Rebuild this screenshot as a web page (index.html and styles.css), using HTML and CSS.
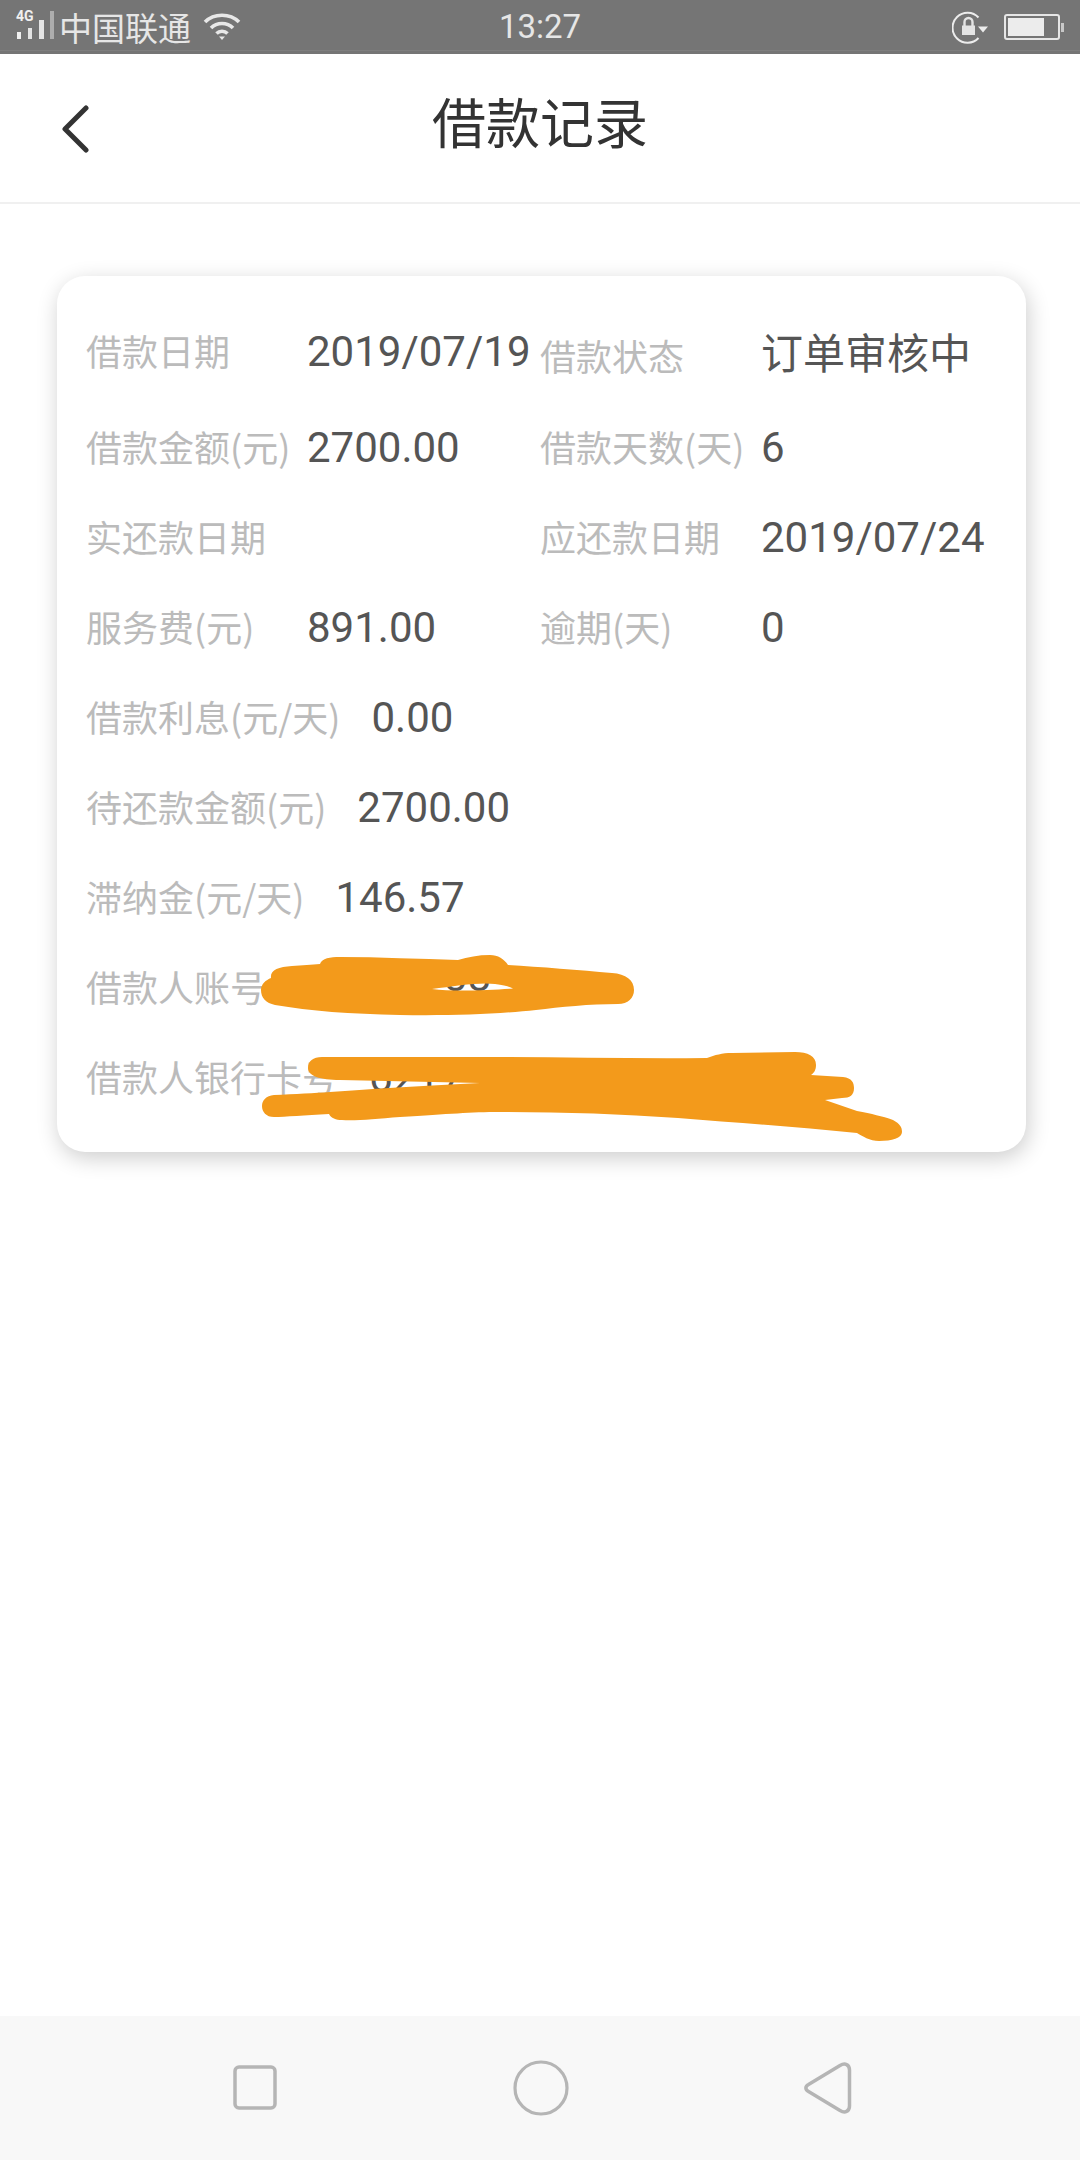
FILE: index.html
```html
<!DOCTYPE html>
<html lang="zh-CN">
<head>
<meta charset="utf-8">
<title>借款记录</title>
<link rel="stylesheet" href="styles.css">
</head>
<body>
<div class="screen">
  <div class="status">
    <div class="status-left">
      <div class="signal">
        <span class="net">4G</span>
        <svg class="bars" viewBox="0 0 40 28" width="40" height="28">
          <rect x="1" y="21" width="4" height="7" fill="#f0f0f0"/>
          <rect x="12" y="17" width="4" height="11" fill="#e4e4e4"/>
          <rect x="23" y="9" width="5" height="19" fill="#e4e4e4"/>
          <rect x="34" y="0" width="4" height="28" fill="#adadad"/>
        </svg>
      </div>
      <span class="carrier">中国联通</span>
      <svg class="wifi" viewBox="0 0 38 28" width="38" height="28" fill="none" stroke="#e8e8e8" stroke-width="3.6">
        <path d="M2 9C11 0 27 0 36 9"/>
        <path d="M8 15C14 9 24 9 30 15"/>
        <path d="M13.5 20.5C16.5 17.5 21.5 17.5 24.5 20.5"/>
        <path d="M16 23.5L19 27L22 23.5Z" fill="#e8e8e8" stroke="none"/>
      </svg>
    </div>
    <span class="time">13:27</span>
    <div class="status-right">
      <svg class="lock" viewBox="0 0 37 33" width="37" height="33" fill="none">
        <path d="M26.500 6.500A15 15 0 1 0 26.500 27" stroke="#ececec" stroke-width="2"/>
        <path d="M10 14.500h13v9.500h-13z" fill="#e4e4e4"/>
        <path d="M12.500 15V11a4 4 0 0 1 8 0V15" stroke="#e4e4e4" stroke-width="2.400"/>
        <path d="M26 15.500h10l-5 6z" fill="#ececec"/>
      </svg>
      <div class="battery"><div class="battery-fill"></div></div>
      <div class="battery-tip"></div>
    </div>
  </div>

  <header class="header">
    <svg class="back" viewBox="0 0 28 48" width="28" height="48" fill="none" stroke="#333" stroke-width="5" stroke-linecap="round" stroke-linejoin="round">
      <path d="M25 3L4 24L25 45"/>
    </svg>
    <h1 class="title">借款记录</h1>
  </header>

  <main class="main">
    <section class="card">
      <div class="row first">
        <div class="field left"><span class="label">借款日期</span><span class="value">2019/07/19</span></div>
        <div class="field right"><span class="label low">借款状态</span><span class="value low-value">订单审核中</span></div>
      </div>
      <div class="row">
        <div class="field left"><span class="label">借款金额(元)</span><span class="value">2700.00</span></div>
        <div class="field right"><span class="label">借款天数(天)</span><span class="value">6</span></div>
      </div>
      <div class="row">
        <div class="field left"><span class="label">实还款日期</span></div>
        <div class="field right"><span class="label">应还款日期</span><span class="value">2019/07/24</span></div>
      </div>
      <div class="row">
        <div class="field left"><span class="label">服务费(元)</span><span class="value">891.00</span></div>
        <div class="field right"><span class="label">逾期(天)</span><span class="value">0</span></div>
      </div>
      <div class="row"><span class="label auto">借款利息(元/天)</span><span class="value">0.00</span></div>
      <div class="row"><span class="label auto">待还款金额(元)</span><span class="value">2700.00</span></div>
      <div class="row"><span class="label auto">滞纳金(元/天)</span><span class="value">146.57</span></div>
      <div class="row"><span class="label auto">借款人账号</span><span class="value hidden-a">38</span></div>
      <div class="row"><span class="label auto">借款人银行卡号</span><span class="value">6217</span></div>

      <svg class="scribble" viewBox="0 0 1080 900" width="1080" height="900">
        <path fill="#f39a1b" fill-rule="evenodd" d="M261 714C261 708 266 704 271 702C270 694 278 691 292 690C302 689 312 689 320 688C322 682 330 681 340 681C380 681 420 683 458 684C468 681 478 679 490 679C498 679 504 683 508 689C540 691 580 694 612 697C626 698 634 704 634 714C634 722 628 728 618 728C590 728 560 731 536 734C500 738 450 740 400 739C350 738 310 735 275 729C266 727 261 722 261 714ZM432 713C455 710 480 706 495 708C505 709 510 711 513 712.500C490 714 455 716 432 713Z"/>
        <path fill="#f39a1b" fill-rule="evenodd" d="M308 792C308 785 313 781 322 781L500 781C570 781 640 783 707 782C715 779 722 777 732 777L795 776C808 776 816 780 816 789C816 794 814 797 811 799L843 801C852 802 854 807 854 812C854 819 850 822 842 822L825 824L857 835C872 838 882 840 893 844C900 848 902 851 902 856C902 862 892 865 879 865C870 865 862 860 857 857C800 851 740 847 678 842C620 838 560 836 500 836C470 836 450 838 400 841C375 843 355 845 342 844C336 844 331 842 329 838C305 839 285 841 274 841C266 841 262 836 262 830C262 824 266 820 274 819C295 818 315 817 330 816C345 815 360 814 373 813C405 811 440 809 480 807L340 804C320 804 308 800 308 792Z"/>
      </svg>
    </section>
  </main>

  <nav class="nav">
    <svg viewBox="0 0 44 46" width="44" height="46" fill="none" stroke="#b5b5b5" stroke-width="3.500">
      <rect x="2" y="2" width="40" height="41" rx="4"/>
    </svg>
    <svg viewBox="0 0 56 56" width="56" height="56" fill="none" stroke="#b5b5b5" stroke-width="3.200">
      <circle cx="28" cy="28" r="26"/>
    </svg>
    <svg viewBox="0 0 48 54" width="48" height="54" fill="none" stroke="#b5b5b5" stroke-width="3.500" stroke-linejoin="round">
      <path d="M4.500 23.500L36 4.500C41 1.500 45.500 3.500 45.500 9V45C45.500 50.500 41 52.500 36 49.500L4.500 30.500C1 28.500 1 25.500 4.500 23.500Z"/>
    </svg>
  </nav>
</div>
</body>
</html>
```
FILE: styles.css
```css
* { box-sizing: border-box; }

html, body {
  margin: 0;
  padding: 0;
  background: #fff;
}

.screen {
  width: 1080px;
  height: 2160px;
  display: flex;
  flex-direction: column;
  font-family: "Noto Sans CJK SC", "Roboto", sans-serif;
  overflow: hidden;
}

/* status bar */
.status {
  height: 54px;
  background: linear-gradient(#757575 50px, #7e7e7e 50px, #7e7e7e 51px, #757575 51px);
  display: grid;
  grid-template-columns: 1fr auto 1fr;
  align-items: center;
  padding: 0 16px;
  color: #ececec;
}

.status-left {
  display: flex;
  align-items: center;
}

.signal {
  width: 43px;
  height: 30px;
  position: relative;
}

.net {
  font-family: "Roboto", sans-serif;
  font-size: 14px;
  font-weight: 700;
  line-height: 14px;
  color: #f0f0f0;
  position: absolute;
  left: 0;
  top: -3px;
}

.bars {
  position: absolute;
  left: 0;
  top: -1px;
}

.carrier {
  font-size: 33px;
  line-height: 44px;
  color: #e6e6e6;
}

.wifi {
  margin-left: 12px;
  margin-top: -1px;
}

.time {
  font-family: "Roboto", sans-serif;
  font-size: 33px;
  line-height: 54px;
  color: #e6e6e6;
}

.status-right {
  display: flex;
  align-items: center;
  justify-content: flex-end;
}

.lock {
  margin-right: 15px;
}

.battery {
  width: 56px;
  height: 26px;
  border: 2px solid #e6e6e6;
  border-radius: 3px;
  padding: 2px;
}

.battery-fill {
  width: 36px;
  height: 100%;
  background: #ececec;
}

.battery-tip {
  width: 3px;
  height: 9px;
  margin-left: 1px;
  background: #c8c8c8;
}

/* header */
.header {
  height: 150px;
  border-bottom: 2px solid #f0f0f0;
  display: flex;
  align-items: center;
  justify-content: center;
  position: relative;
  flex: none;
}

.back {
  position: absolute;
  left: 61px;
  top: 51px;
}

.title {
  margin: 0 0 14px;
  font-size: 54px;
  font-weight: 400;
  line-height: 74px;
  color: #333;
}

/* main */
.main {
  flex: 1;
  padding: 72px 54px 0 57px;
}

.card {
  position: relative;
  height: 876px;
  padding: 31px 0 0 29px;
  background: #fff;
  border-radius: 28px;
  box-shadow: 2px 6px 22px rgba(0, 0, 0, 0.2);
}

.row {
  height: 90px;
  display: flex;
  align-items: center;
}

.first {
  margin-bottom: 6px;
}

.field {
  display: flex;
  align-items: center;
  height: 100%;
}

.left {
  width: 454px;
}

.label {
  flex: none;
  width: 221px;
  padding-bottom: 4px;
  font-size: 36px;
  line-height: 50px;
  color: #bbb;
}

.label.auto {
  width: auto;
  margin-right: 31px;
}

.label.low {
  padding: 6px 0 0;
}

.value {
  font-family: "Roboto", "Noto Sans CJK SC", sans-serif;
  font-size: 42px;
  line-height: 56px;
  color: #555;
  white-space: nowrap;
}

.low-value {
  margin-top: 6px;
}

.hidden-a {
  margin: 0 0 22px 147px;
}

/* hand-drawn redaction over the account numbers */
.scribble {
  position: absolute;
  left: -57px;
  top: 0;
  pointer-events: none;
}

/* navigation bar */
.nav {
  height: 144px;
  flex: none;
  background: #f8f8f8;
  display: flex;
  justify-content: space-between;
  align-items: center;
  padding: 0 228px 0 233px;
}
```
